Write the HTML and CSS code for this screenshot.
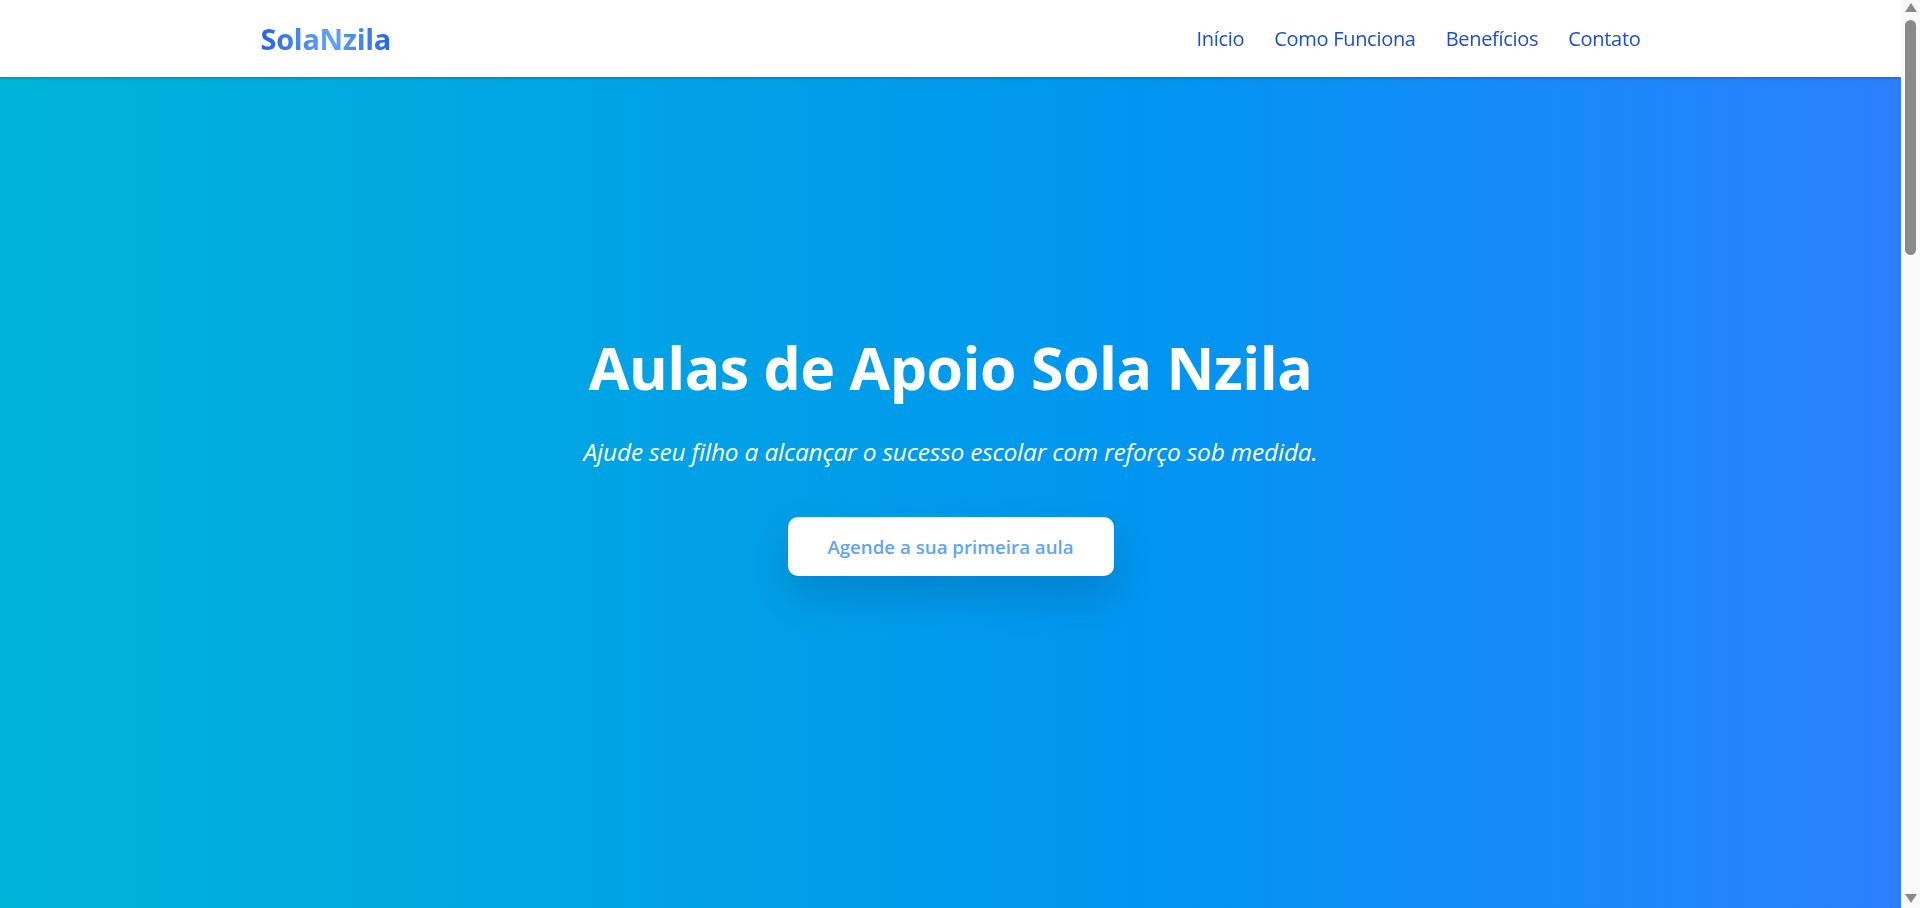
FILE: index.html
```html
<!DOCTYPE html>
<html lang="pt">
<head>
<meta charset="utf-8">
<title>SolaNzila - Aulas de Apoio</title>
<link rel="stylesheet" href="styles.css">
</head>
<body>
<header class="site-header">
  <div class="container header-inner">
    <a class="logo" href="#inicio">SolaNzila</a>
    <nav class="nav">
      <a href="#inicio">Início</a>
      <a href="#como">Como Funciona</a>
      <a href="#beneficios">Benefícios</a>
      <a href="#contato">Contato</a>
    </nav>
  </div>
</header>

<section class="hero" id="inicio">
  <div class="hero-content">
    <h1 class="hero-title">Aulas de Apoio Sola Nzila</h1>
    <p class="hero-sub">Ajude seu filho a alcançar o sucesso escolar com reforço sob medida.</p>
    <a class="hero-btn" href="#contato">Agende a sua primeira aula</a>
  </div>
</section>

<section class="section" id="como">
  <div class="container">
    <h2 class="section-title">Como Funciona</h2>
    <div class="cards">
      <div class="card"><h3>1. Avaliação</h3><p>Identificamos as dificuldades e os objetivos do aluno.</p></div>
      <div class="card"><h3>2. Plano</h3><p>Criamos um plano de estudos personalizado.</p></div>
      <div class="card"><h3>3. Aulas</h3><p>Aulas semanais com acompanhamento contínuo.</p></div>
    </div>
  </div>
</section>

<section class="section alt" id="beneficios">
  <div class="container">
    <h2 class="section-title">Benefícios</h2>
    <div class="cards">
      <div class="card"><h3>Professores qualificados</h3><p>Equipa experiente e dedicada.</p></div>
      <div class="card"><h3>Horários flexíveis</h3><p>Aulas adaptadas à rotina da família.</p></div>
      <div class="card"><h3>Resultados</h3><p>Melhoria nas notas e na confiança.</p></div>
    </div>
  </div>
</section>

<section class="section" id="contato">
  <div class="container">
    <h2 class="section-title">Contato</h2>
    <p class="contact-text">Entre em contacto connosco para agendar a primeira aula.</p>
  </div>
</section>

<footer class="footer">© 2024 SolaNzila</footer>

<div class="scrollbar" aria-hidden="true">
  <span class="sb-arrow sb-up"></span>
  <span class="sb-thumb"></span>
  <span class="sb-arrow sb-down"></span>
</div>
</body>
</html>
```

FILE: styles.css
```css
* { box-sizing: border-box; }
html, body { margin: 0; padding: 0; }
body {
  font-family: "Open Sans", "Noto Sans", "Liberation Sans", sans-serif;
  color: #1f2937;
  background: #ffffff;
  margin-right: 19px;
}
a { text-decoration: none; }

.container {
  max-width: 1400px;
  margin: 0 auto;
  padding: 0 10px;
}

.site-header {
  position: fixed;
  top: 0;
  left: 0;
  right: 19px;
  height: 77px;
  background: #ffffff;
  box-shadow: 0 1px 3px rgba(0, 0, 0, 0.25);
  z-index: 10;
}
.header-inner {
  height: 100%;
  display: flex;
  align-items: center;
  justify-content: space-between;
}
.logo {
  font-size: 29px;
  font-weight: 700;
  letter-spacing: -0.3px;
  background: linear-gradient(90deg, #2563eb 0%, #60a5fa 55%, #2563eb 100%);
  -webkit-background-clip: text;
  background-clip: text;
  color: transparent;
}
.nav {
  display: flex;
  gap: 30px;
}
.nav a {
  font-size: 20px;
  font-weight: 500;
  color: #1d4ed8;
  letter-spacing: -0.3px;
}

.hero {
  height: 100vh;
  background: linear-gradient(90deg, #00b4d8 0%, #0096f0 60%, #2b7fff 100%);
  display: flex;
  align-items: center;
  justify-content: center;
  text-align: center;
  color: #ffffff;
}
.hero-content {
  display: flex;
  flex-direction: column;
  align-items: center;
}
.hero-title {
  margin: 0;
  font-size: 59px;
  font-weight: 700;
  line-height: 1.2;
  letter-spacing: -0.5px;
}
.hero-sub {
  margin: 33px 0 0;
  font-size: 24.5px;
  font-style: italic;
  letter-spacing: -0.2px;
}
.hero-btn {
  margin-top: 49px;
  width: 326px;
  height: 59px;
  display: flex;
  align-items: center;
  justify-content: center;
  background: #ffffff;
  color: #60a5fa;
  font-size: 18.7px;
  font-weight: 600;
  border-radius: 10px;
  box-shadow: 0 20px 40px rgba(0, 40, 90, 0.2);
}

.section {
  padding: 120px 0;
  min-height: 700px;
}
.section.alt { background: #f3f7fd; }
.section-title {
  margin: 0 0 48px;
  text-align: center;
  font-size: 40px;
  color: #1d4ed8;
}
.cards {
  display: grid;
  grid-template-columns: repeat(3, 1fr);
  gap: 30px;
}
.card {
  background: #ffffff;
  border-radius: 12px;
  padding: 32px;
  box-shadow: 0 8px 24px rgba(0, 0, 0, 0.08);
}
.card h3 { margin: 0 0 12px; color: #2563eb; }
.card p { margin: 0; color: #4b5563; }
.contact-text { text-align: center; font-size: 20px; }
.footer {
  padding: 40px 0;
  text-align: center;
  background: #1e3a8a;
  color: #ffffff;
}

/* browser-like scrollbar drawn over the right edge */
.scrollbar {
  position: fixed;
  top: 0;
  right: 0;
  width: 19px;
  height: 100vh;
  background: #f9f9f9;
  display: flex;
  flex-direction: column;
  align-items: center;
  z-index: 20;
}
.sb-arrow {
  width: 0;
  height: 0;
  border-left: 6px solid transparent;
  border-right: 6px solid transparent;
}
.sb-up {
  margin-top: 3px;
  border-bottom: 9px solid #8a8a8a;
}
.sb-thumb {
  margin-top: 8px;
  width: 11px;
  height: 235px;
  border-radius: 6px;
  background: #8a8a8a;
}
.sb-down {
  margin-top: auto;
  margin-bottom: 5px;
  border-top: 9px solid #8a8a8a;
}
```
